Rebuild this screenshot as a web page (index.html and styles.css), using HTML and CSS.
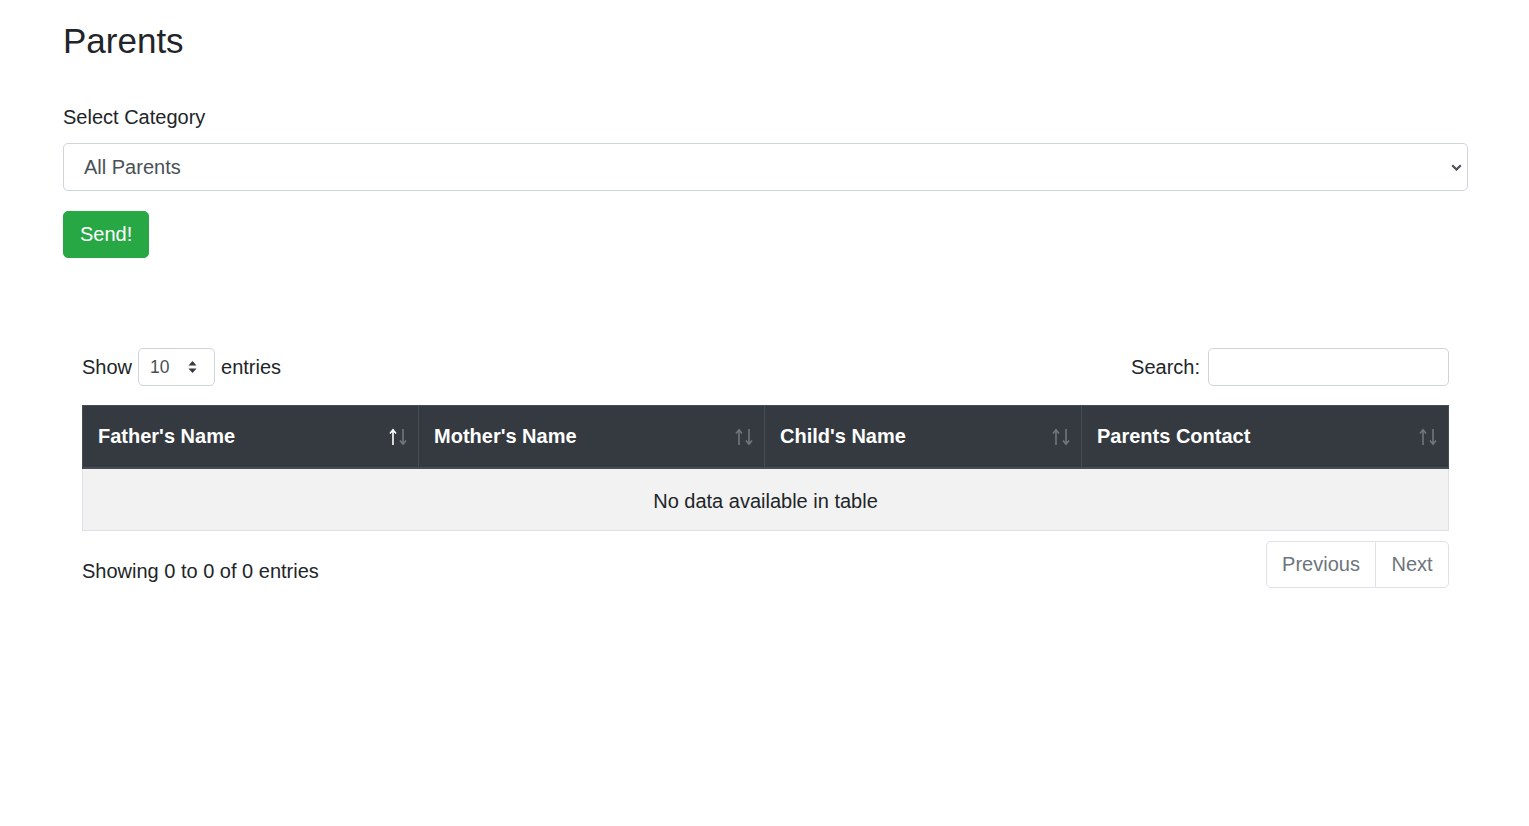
FILE: index.html
```html
<!DOCTYPE html>
<html lang="en">
<head>
<meta charset="utf-8">
<title>Parents</title>
<link rel="stylesheet" href="styles.css">
</head>
<body>
<div class="page">
  <h2 class="title">Parents</h2>
  <form class="form">
    <div class="form-group">
      <label class="label" for="cat">Select Category</label>
      <select id="cat" class="select">
        <option>All Parents</option>
      </select>
    </div>
    <button type="button" class="btn-send">Send!</button>
  </form>

  <section class="dt">
    <div class="dt-top">
      <label class="dt-length">Show
        <select class="dt-select"><option>10</option></select>
        entries</label>
      <label class="dt-search">Search:
        <input type="search" class="dt-input">
      </label>
    </div>
    <table class="table">
      <thead>
        <tr>
          <th class="col-1 sort-asc">Father's Name<span class="sort"><svg class="up" viewBox="0 0 8 18" width="8" height="18"><path d="M4 17V2M1 5.5L4 1.8 7 5.5" fill="none" stroke="currentColor" stroke-width="1.6"/></svg><svg class="down" viewBox="0 0 8 18" width="8" height="18"><path d="M4 1v15M1 12.5L4 16.2 7 12.5" fill="none" stroke="currentColor" stroke-width="1.6"/></svg></span></th>
          <th class="col-2">Mother's Name<span class="sort"><svg class="up" viewBox="0 0 8 18" width="8" height="18"><path d="M4 17V2M1 5.5L4 1.8 7 5.5" fill="none" stroke="currentColor" stroke-width="1.6"/></svg><svg class="down" viewBox="0 0 8 18" width="8" height="18"><path d="M4 1v15M1 12.5L4 16.2 7 12.5" fill="none" stroke="currentColor" stroke-width="1.6"/></svg></span></th>
          <th class="col-3">Child's Name<span class="sort"><svg class="up" viewBox="0 0 8 18" width="8" height="18"><path d="M4 17V2M1 5.5L4 1.8 7 5.5" fill="none" stroke="currentColor" stroke-width="1.6"/></svg><svg class="down" viewBox="0 0 8 18" width="8" height="18"><path d="M4 1v15M1 12.5L4 16.2 7 12.5" fill="none" stroke="currentColor" stroke-width="1.6"/></svg></span></th>
          <th class="col-4">Parents Contact<span class="sort"><svg class="up" viewBox="0 0 8 18" width="8" height="18"><path d="M4 17V2M1 5.5L4 1.8 7 5.5" fill="none" stroke="currentColor" stroke-width="1.6"/></svg><svg class="down" viewBox="0 0 8 18" width="8" height="18"><path d="M4 1v15M1 12.5L4 16.2 7 12.5" fill="none" stroke="currentColor" stroke-width="1.6"/></svg></span></th>
        </tr>
      </thead>
      <tbody>
        <tr><td class="empty" colspan="4">No data available in table</td></tr>
      </tbody>
    </table>
    <div class="dt-bottom">
      <div class="dt-info">Showing 0 to 0 of 0 entries</div>
      <ul class="pagination">
        <li class="page-link first">Previous</li>
        <li class="page-link last">Next</li>
      </ul>
    </div>
  </section>
</div>
</body>
</html>
```

FILE: styles.css
```css
* { box-sizing: border-box; }
html, body { margin: 0; padding: 0; background: #fff; }
body {
  font-family: "Liberation Sans", Arial, sans-serif;
  font-size: 20px;
  line-height: 1.5;
  color: #212529;
}
.page { padding: 20px 61px 40px 63px; }
.title {
  margin: 0 0 40px;
  font-size: 35px;
  font-weight: 400;
  line-height: 42px;
}
.form { margin: 0; }
.form-group { margin-bottom: 20px; }
.label { display: block; margin-bottom: 11px; }
.select {
  display: block;
  width: 100%;
  height: 48px;
  padding: 7px 40px 7px 20px;
  font-family: inherit;
  font-size: 20px;
  color: #495057;
  background: #fff url("data:image/svg+xml,%3Csvg xmlns='http://www.w3.org/2000/svg' width='11' height='7' viewBox='0 0 11 7'%3E%3Cpath d='M1.2 1.2l4.3 4.3 4.3-4.3' fill='none' stroke='%23495057' stroke-width='2.2'/%3E%3C/svg%3E") no-repeat right 5px center / 11px 7px;
  border: 1px solid #ced4da;
  border-radius: 5px;
  appearance: none;
  -webkit-appearance: none;
}
.btn-send {
  display: block;
  height: 47px;
  padding: 0 16px;
  font-family: inherit;
  font-size: 20px;
  color: #fff;
  background: #28a745;
  border: 1px solid #28a745;
  border-radius: 5px;
}
.dt { margin: 90px 19px 0; }
.dt-top {
  display: flex;
  justify-content: space-between;
  align-items: center;
  height: 38px;
  margin-bottom: 19px;
}
.dt-length, .dt-search { display: flex; align-items: center; white-space: nowrap; }
.dt-select {
  width: 77px;
  height: 38px;
  margin: 0 6px;
  padding: 0 10px 0 11px;
  font-family: inherit;
  font-size: 17.5px;
  color: #495057;
  background: #fff url("data:image/svg+xml,%3Csvg xmlns='http://www.w3.org/2000/svg' width='10' height='14' viewBox='0 0 10 14'%3E%3Cpath d='M5 1L1 5.5h8zM5 13L1 8.5h8z' fill='%23343a40'/%3E%3C/svg%3E") no-repeat right 16px center / 11px 14px;
  border: 1px solid #ced4da;
  border-radius: 5px;
  appearance: none;
  -webkit-appearance: none;
}
.dt-input {
  width: 241px;
  height: 38px;
  margin-left: 8px;
  padding: 0 10px;
  font-family: inherit;
  font-size: 17.5px;
  border: 1px solid #ced4da;
  border-radius: 5px;
}
.table {
  width: 100%;
  border-collapse: collapse;
  table-layout: fixed;
}
.table th {
  position: relative;
  height: 62px;
  padding: 14px 30px 14px 15px;
  text-align: left;
  font-weight: 700;
  color: #fff;
  background: #343a40;
  border: 1px solid #454d55;
  border-bottom-width: 2px;
}
.col-1 { width: 336px; }
.col-2 { width: 346px; }
.col-3 { width: 317px; }
.sort {
  position: absolute;
  top: 22px;
  right: 11px;
  display: flex;
  gap: 2px;
  color: #fff;
}
.sort svg { display: block; opacity: 0.3; }
.sort-asc .sort .up { opacity: 1; }
.table td {
  height: 63px;
  padding: 17px 15px 14px;
  border: 1px solid #dee2e6;
  border-top: 0;
}
.empty { text-align: center; background: #f2f2f2; }
.dt-bottom {
  display: flex;
  justify-content: space-between;
  align-items: flex-start;
  margin-top: 10px;
}
.dt-info { padding-top: 15px; }
.pagination {
  display: flex;
  margin: 0;
  padding: 0;
  list-style: none;
}
.page-link {
  padding: 10px 15px;
  line-height: 25px;
  color: #6c757d;
  background: #fff;
  border: 1px solid #dee2e6;
}
.page-link.first { border-radius: 5px 0 0 5px; width: 110px; text-align: center; }
.page-link.last { margin-left: -1px; border-radius: 0 5px 5px 0; width: 74px; text-align: center; }
```
